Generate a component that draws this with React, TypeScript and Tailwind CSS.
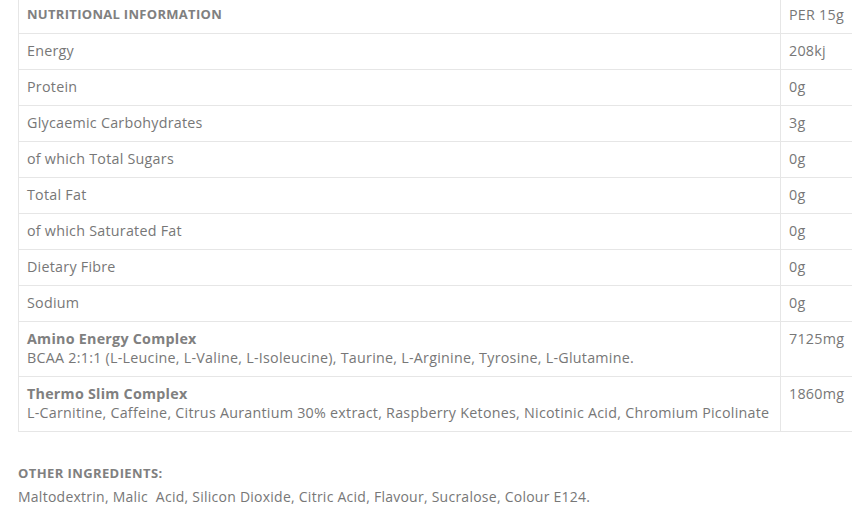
import React from 'react';

interface Row {
  label: string;
  detail?: string;
  value: string;
}

const rows: Row[] = [
  { label: 'Energy', value: '208kj' },
  { label: 'Protein', value: '0g' },
  { label: 'Glycaemic Carbohydrates', value: '3g' },
  { label: 'of which Total Sugars', value: '0g' },
  { label: 'Total Fat', value: '0g' },
  { label: 'of which Saturated Fat', value: '0g' },
  { label: 'Dietary Fibre', value: '0g' },
  { label: 'Sodium', value: '0g' },
  {
    label: 'Amino Energy Complex',
    detail: 'BCAA 2:1:1 (L-Leucine, L-Valine, L-Isoleucine), Taurine, L-Arginine, Tyrosine, L-Glutamine.',
    value: '7125mg',
  },
  {
    label: 'Thermo Slim Complex',
    detail:
      'L-Carnitine, Caffeine, Citrus Aurantium 30% extract, Raspberry Ketones, Nicotinic Acid, Chromium Picolinate',
    value: '1860mg',
  },
];

const App: React.FC = () => {
  return (
    <div className="w-[852px] h-[511px] overflow-hidden bg-white font-['Open_Sans',sans-serif] text-[14.3px] leading-[19px] tracking-[0.25px] text-[#777]">
      <div className="pl-[18px] -mt-[3px]">
        <table className="w-[860px] table-fixed border-collapse">
          <tbody>
            <tr className="border border-[#e6e6e6]">
              <td className="w-[762px] border-r border-[#e6e6e6] px-2 pt-[7px] pb-[9px] font-bold text-[13px] tracking-[0.3px] text-[#808080] uppercase">
                Nutritional Information
              </td>
              <td className="px-2 pt-[7px] pb-[9px]">PER 15g</td>
            </tr>
            {rows.map((row) => (
              <tr key={row.label} className="border border-[#e6e6e6] align-top">
                <td className="border-r border-[#e6e6e6] px-2 pt-[7px] pb-[9px]">
                  {row.detail ? (
                    <>
                      <div className="font-bold text-[#808080]">{row.label}</div>
                      <div className="whitespace-nowrap">{row.detail}</div>
                    </>
                  ) : (
                    row.label
                  )}
                </td>
                <td className="px-2 pt-[7px] pb-[9px]">{row.value}</td>
              </tr>
            ))}
          </tbody>
        </table>

        <div className="mt-[30px] text-[14px] leading-[23px]">
          <div className="font-bold text-[13px] tracking-[0.4px] text-[#808080] uppercase">Other ingredients:</div>
          <div>Maltodextrin, Malic&nbsp; Acid, Silicon Dioxide, Citric Acid, Flavour, Sucralose, Colour E124.</div>
        </div>
      </div>
    </div>
  );
};

export default App;
